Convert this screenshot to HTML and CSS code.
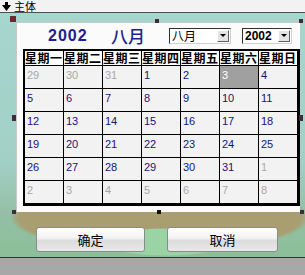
FILE: index.html
```html
<!DOCTYPE html>
<html lang="zh">
<head>
	<meta charset="UTF-8" />
	<title>主体</title>
	<link rel="stylesheet" href="styles.css">
</head>
<body>
	<div class="topbar">
		<svg class="arrow" width="9" height="9" viewBox="0 0 9 9"><path d="M3 0h3v3h3L4.5 9 0 3h3z" fill="#000"/></svg>
		<span class="title">主体</span>
	</div>

	<div class="canvas">
		<div class="form">
			<!-- selection handles -->
			<i class="handle h-tl"></i>
			<i class="handle h-tm"></i>
			<i class="handle h-tr"></i>
			<i class="handle h-ml"></i>
			<i class="handle h-mr"></i>
			<i class="handle h-bl"></i>
			<i class="handle h-bm"></i>
			<i class="handle h-br"></i>

			<div class="cal-head">
				<span class="year">2002</span>
				<span class="month">八月</span>
				<div class="combo combo-month"><span>八月</span><b class="drop"></b></div>
				<div class="combo combo-year"><span>2002</span><b class="drop"></b></div>
			</div>

			<div class="cal">
				<div class="wd">星期一</div><div class="wd">星期二</div><div class="wd">星期三</div><div class="wd">星期四</div><div class="wd">星期五</div><div class="wd">星期六</div><div class="wd">星期日</div>
				<div class="day other">29</div><div class="day other">30</div><div class="day other">31</div><div class="day">1</div><div class="day">2</div><div class="day selected">3</div><div class="day">4</div>
				<div class="day">5</div><div class="day">6</div><div class="day">7</div><div class="day">8</div><div class="day">9</div><div class="day">10</div><div class="day">11</div>
				<div class="day">12</div><div class="day">13</div><div class="day">14</div><div class="day">15</div><div class="day">16</div><div class="day">17</div><div class="day">18</div>
				<div class="day">19</div><div class="day">20</div><div class="day">21</div><div class="day">22</div><div class="day">23</div><div class="day">24</div><div class="day">25</div>
				<div class="day">26</div><div class="day">27</div><div class="day">28</div><div class="day">29</div><div class="day">30</div><div class="day">31</div><div class="day other">1</div>
				<div class="day other">2</div><div class="day other">3</div><div class="day other">4</div><div class="day other">5</div><div class="day other">6</div><div class="day other">7</div><div class="day other">8</div>
			</div>
		</div>

		<div class="buttons">
			<button class="btn btn-ok">确定</button>
			<button class="btn btn-cancel">取消</button>
		</div>
	</div>

	<div class="status"></div>
</body>
</html>
```

FILE: styles.css
```css
body {
	margin: 0;
	width: 305px;
	height: 275px;
	overflow: hidden;
	font-family: "Liberation Sans", "Noto Sans CJK SC", sans-serif;
	background: #a8a8a8;
}

.topbar {
	height: 12px;
	border-bottom: 1px solid #505050;
	background: #f2f2f2;
	display: flex;
	align-items: center;
	gap: 3px;
	padding-left: 2px;
	font-family: "Noto Sans CJK SC", sans-serif;
	font-size: 11px;
	color: #000;
}

.arrow {
	flex: none;
}

.title {
	line-height: 12px;
}

.canvas {
	height: 244px;
	padding-top: 9px;
	box-sizing: border-box;
	background:
		radial-gradient(ellipse 65px 14px at 165px 229px, #9ad4a4 0 92%, transparent 100%),
		radial-gradient(ellipse 150px 34px at 160px 205px, #a89e70 0 94%, transparent 100%),
		linear-gradient(180deg, #a6d6ce 0, #a2d0c6 60%, #94bfa6 82%, #8cbf98 100%);
}

.form {
	position: relative;
	margin-left: 16px;
	width: 284px;
	height: 190px;
	box-sizing: border-box;
	padding: 0 2px 7px 6px;
	background: #fbfbfb;
	border-top: 1px solid #c8c8c8;
	border-left: 1px solid #c8c8c8;
}

.handle {
	position: absolute;
	width: 4px;
	height: 4px;
	background: #3c2c3c;
}

.h-tl { left: -7px; top: -7px; width: 6px; height: 6px; background: #6a2a30; }
.h-tm { left: 138px; top: -4px; }
.h-tr { left: 282px; top: -4px; }
.h-ml { left: -5px; top: 92px; width: 4px; height: 6px; }
.h-mr { left: 282px; top: 92px; width: 4px; height: 6px; }
.h-bl { left: -5px; top: 187px; }
.h-bm { left: 140px; top: 187px; background: #101010; }
.h-br { left: 283px; top: 187px; }

.cal-head {
	height: 26px;
	display: flex;
	align-items: center;
	color: #1a2290;
}

.year {
	margin-left: 25px;
	width: 63px;
	font-size: 16px;
	font-weight: bold;
	letter-spacing: 1px;
}

.month {
	width: 58px;
	font-family: "Noto Sans CJK SC", sans-serif;
	font-size: 17px;
	font-weight: 500;
	line-height: 18px;
}

.combo {
	height: 16px;
	box-sizing: border-box;
	border: 1px solid #303030;
	border-right-color: #d0d0d0;
	border-bottom-color: #d0d0d0;
	background: #fff;
	display: flex;
	align-items: center;
	justify-content: space-between;
	padding: 0 1px 0 2px;
	color: #000;
	font-size: 12px;
	font-weight: bold;
}

.combo span {
	font-family: "Noto Sans CJK SC", sans-serif;
	line-height: 12px;
}

.combo-month {
	width: 62px;
	font-weight: normal;
}

.combo-year {
	width: 50px;
	margin-left: 11px;
}

.combo-year span {
	font-family: "Liberation Sans", sans-serif;
}

.drop {
	width: 12px;
	height: 12px;
	box-sizing: border-box;
	background: #e4e4e4;
	border: 1px solid #fff;
	border-right-color: #606060;
	border-bottom-color: #606060;
	position: relative;
}

.drop::after {
	content: "";
	position: absolute;
	left: 2px;
	top: 3px;
	border-left: 3px solid transparent;
	border-right: 3px solid transparent;
	border-top: 3px solid #000;
}

.cal {
	display: grid;
	grid-template-columns: repeat(7, 38px);
	grid-template-rows: 14px repeat(6, 22px);
	gap: 1px;
	width: max-content;
	background: #000;
	border: 2px solid #000;
	border-right-width: 3px;
	border-bottom-width: 3px;
}

.wd {
	background: #fff;
	font-family: "Noto Sans CJK SC", sans-serif;
	font-weight: bold;
	font-size: 12px;
	line-height: 14px;
	letter-spacing: 0.5px;
	white-space: nowrap;
	color: #000;
}

.day {
	background: #f2f2f2;
	color: #14147a;
	font-size: 11px;
	line-height: 13px;
	padding: 3px 0 0 2px;
}

.day.other {
	color: #a8a8a8;
}

.day.selected {
	background: #a0a0a0;
	color: #fff;
}

.buttons {
	display: flex;
	gap: 22px;
	padding-left: 36px;
	margin-top: 15px;
}

.btn {
	height: 25px;
	border: 1px solid #8c8c8c;
	border-radius: 3px;
	background: linear-gradient(180deg, #ffffff 0, #f2f2f2 45%, #dcdcdc 55%, #e8e8e8 100%);
	font-family: "Noto Sans CJK SC", sans-serif;
	font-size: 13px;
	color: #000;
	padding: 0;
}

.btn-ok {
	width: 109px;
}

.btn-cancel {
	width: 111px;
}

.status {
	height: 17px;
	border-top: 1px solid #303030;
	background: #a8a8a8;
}
```
